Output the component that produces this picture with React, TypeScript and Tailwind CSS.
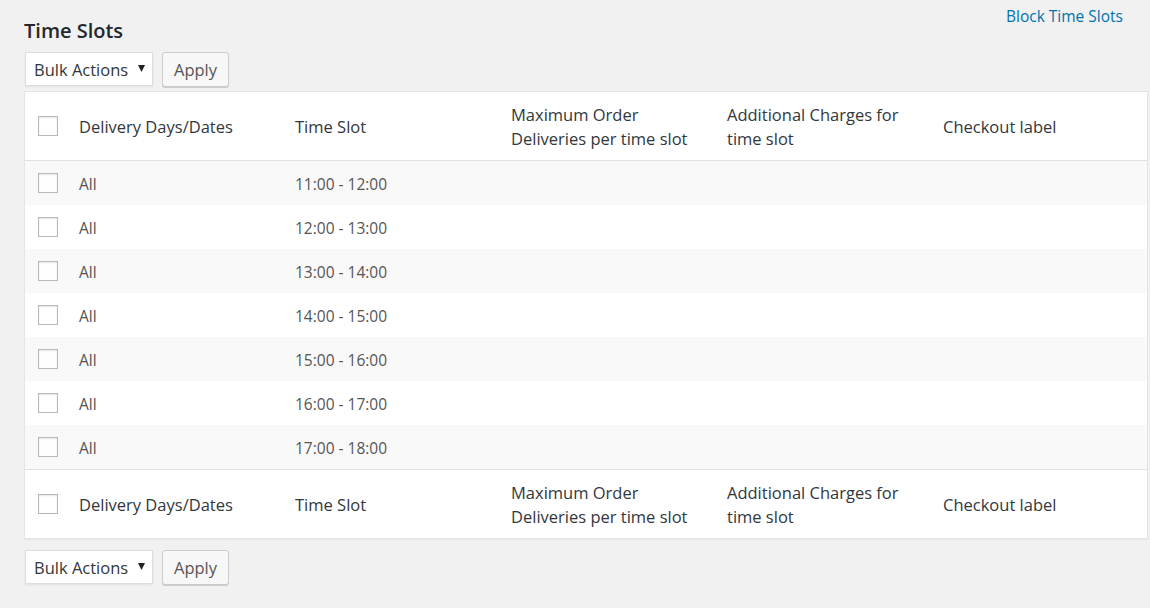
const slots = [
  "11:00 - 12:00",
  "12:00 - 13:00",
  "13:00 - 14:00",
  "14:00 - 15:00",
  "15:00 - 16:00",
  "16:00 - 17:00",
  "17:00 - 18:00"
]

const cols = "grid grid-cols-[46px_216px_216px_216px_216px_1fr]"

function Box() {
  return <span className="block h-[20px] w-[20px] border border-[#b4b9be] bg-white shadow-[inset_0_1px_2px_rgba(0,0,0,0.1)]" />
}

function BulkActions() {
  return (
    <div className="flex h-[35px] items-start gap-[9px] pl-[1px]">
      <div className="flex h-[34px] w-[128px] items-center justify-between border border-[#ddd] bg-white pt-[2px] pl-[8px] pr-[7px] text-[16.5px] text-[#32373c] shadow-[0_1px_2px_rgba(0,0,0,0.07)]">
        <span>Bulk Actions</span>
        <svg width="7" height="7" viewBox="0 0 7 7" className="mb-[4px]">
          <path d="M0 0h7L3.5 7z" fill="#222" />
        </svg>
      </div>
      <button
        type="button"
        className="h-[35px] w-[67px] rounded-[3px] border border-[#ccc] bg-[#f7f7f7] pt-[2px] text-[16.5px] text-[#555] shadow-[0_1px_0_#ccc]"
      >
        Apply
      </button>
    </div>
  )
}

function HeadRow({ top }: { top: boolean }) {
  return (
    <div
      className={`${cols} h-[69px] items-center bg-white text-[16.5px] leading-[24px] text-[#32373c] ${
        top ? "border-b border-[#e1e1e1]" : "border-t border-[#e1e1e1]"
      }`}
    >
      <div className="pl-[13px]">
        <Box />
      </div>
      <div className="px-[8px] pt-[2px]">Delivery Days/Dates</div>
      <div className="px-[8px] pt-[2px]">Time Slot</div>
      <div className="px-[8px] pt-[2px]">
        Maximum Order
        <br />
        Deliveries per time slot
      </div>
      <div className="px-[8px] pt-[2px]">
        Additional Charges for
        <br />
        time slot
      </div>
      <div className="px-[8px] pt-[2px]">Checkout label</div>
    </div>
  )
}

export default function App() {
  return (
    <div className="min-h-[608px] bg-[#f1f1f1] pl-[24px] pr-[2px] font-['Open_Sans',sans-serif]">
      <div className="flex h-[52px] items-start justify-between">
        <h1 className="mt-[19px] text-[20px] leading-[24px] font-semibold text-[#23282d]">Time Slots</h1>
        <a href="#" className="mt-[6px] mr-[25px] text-[15.5px] leading-[20px] text-[#0073aa]">
          Block Time Slots
        </a>
      </div>
      <BulkActions />
      <div className="mt-[4px] border border-[#e5e5e5] bg-white shadow-[0_1px_1px_rgba(0,0,0,0.04)]">
        <HeadRow top />
        {slots.map((slot, i) => (
          <div
            key={slot}
            className={`${cols} h-[44px] items-center text-[15.5px] text-[#555] ${i % 2 === 0 ? "bg-[#f9f9f9]" : "bg-white"}`}
          >
            <div className="pl-[13px]">
              <Box />
            </div>
            <div className="px-[8px] pt-[3px]">All</div>
            <div className="px-[8px] pt-[3px]">{slot}</div>
            <div />
            <div />
            <div />
          </div>
        ))}
        <HeadRow top={false} />
      </div>
      <div className="mt-[11px]">
        <BulkActions />
      </div>
    </div>
  )
}
